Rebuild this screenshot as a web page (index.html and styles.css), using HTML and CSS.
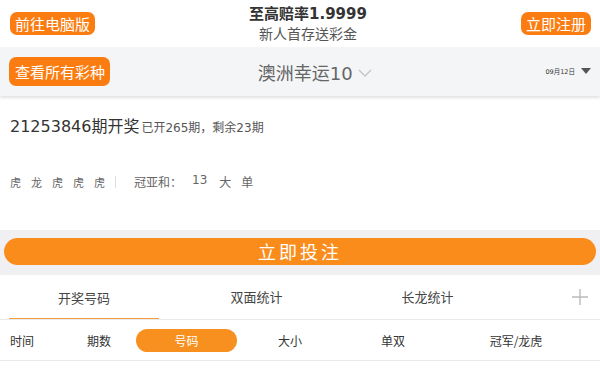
FILE: index.html
```html
<!DOCTYPE html>
<html lang="zh-CN">
<head>
    <meta charset="UTF-8">
    <meta name="viewport" content="width=device-width, initial-scale=1.0">
    <title>澳洲幸运10</title>
    <link rel="stylesheet" href="styles.css">
</head>
<body>
    <div class="topbar">
        <a class="btn">前往电脑版</a>
        <div class="promo">
            <div class="promo-title">至高赔率1.9999</div>
            <div class="promo-sub">新人首存送彩金</div>
        </div>
        <a class="btn">立即注册</a>
    </div>

    <div class="lottery-bar">
        <a class="btn btn-big">查看所有彩种</a>
        <div class="lottery-name">
            澳洲幸运10
            <svg width="14" height="8" viewBox="0 0 14 8"><path d="M1 1l6 6 6-6" fill="none" stroke="#c4c4c4" stroke-width="1.3"/></svg>
        </div>
        <div class="date">
            09月12日
            <svg width="10" height="6" viewBox="0 0 10 6"><path d="M0 0h10L5 6z" fill="#555"/></svg>
        </div>
    </div>

    <div class="result">
        <div class="issue">21253846期开奖<span class="issue-info">已开265期，剩余23期</span></div>
        <div class="draw">
            <span class="dt">虎</span><span class="dt">龙</span><span class="dt">虎</span><span class="dt">虎</span><span class="dt">虎</span>
            <span class="sep"></span>
            <span class="sum-label">冠亚和：</span>
            <span class="sum-num">13</span>
            <span class="sum-tag">大</span>
            <span class="sum-tag">单</span>
        </div>
    </div>

    <div class="bet-strip">
        <a class="bet-btn">立即投注</a>
    </div>

    <div class="tabs">
        <div class="tab active">开奖号码</div>
        <div class="tab">双面统计</div>
        <div class="tab">长龙统计</div>
        <div class="tab-plus">
            <svg width="18" height="18" viewBox="0 0 18 18"><path d="M9 1v16M1 9h16" stroke="#bbb" stroke-width="1.4"/></svg>
        </div>
    </div>

    <div class="cols">
        <div class="col col-left">时间</div>
        <div class="col">期数</div>
        <div class="col"><span class="pill">号码</span></div>
        <div class="col">大小</div>
        <div class="col">单双</div>
        <div class="col">冠军/龙虎</div>
    </div>
</body>
</html>
```

FILE: styles.css
```css
body {
    margin: 0;
    font-family: "DejaVu Sans", "Noto Sans CJK SC", sans-serif;
    color: #333;
    background: #fff;
    width: 600px;
    height: 375px;
    overflow: hidden;
}
.btn {
    display: inline-block;
    background-color: #fb7d12;
    color: #fff;
    font-family: "Noto Sans CJK SC", sans-serif;
    font-size: 15px;
    line-height: 23px;
    padding: 0 5px;
    border-radius: 7px;
}
.btn-big {
    line-height: 29px;
    padding: 0 5px 0 6px;
    border-radius: 7px;
}
.topbar {
    display: flex;
    align-items: center;
    justify-content: space-between;
    height: 47px;
    padding: 0 9px 0 10px;
}
.promo {
    text-align: center;
    margin-top: -1px;
}
.promo-title {
    font-size: 15px;
    font-weight: bold;
    line-height: 20px;
    color: #333;
}
.promo-sub {
    font-family: "Noto Sans CJK SC", sans-serif;
    font-size: 14px;
    line-height: 18px;
    color: #555;
}
.lottery-bar {
    display: flex;
    align-items: center;
    height: 49px;
    padding: 0 9px 0 9px;
    background-color: #f4f5f7;
    box-shadow: 0 2px 3px rgba(0, 0, 0, 0.12);
    position: relative;
}
.lottery-name {
    flex: 1;
    display: flex;
    align-items: center;
    justify-content: center;
    gap: 5px;
    font-size: 18px;
    color: #666;
    margin-left: -26px;
}
.lottery-name svg {
    margin-top: 2px;
}
.date {
    display: flex;
    align-items: center;
    gap: 6px;
    font-size: 6.5px;
    color: #333;
    margin-top: -2px;
}
.result {
    height: 134px;
    padding: 0 10px;
}
.issue {
    padding-top: 21px;
    font-size: 16px;
    line-height: 20px;
    color: #333;
}
.issue-info {
    font-size: 12px;
    color: #555;
    margin-left: 2px;
}
.draw {
    display: flex;
    align-items: center;
    margin-top: 35px;
    font-size: 11px;
    color: #666;
    font-family: "Noto Sans CJK SC", sans-serif;
}
.dt {
    margin-right: 10px;
}
.sep {
    width: 1px;
    height: 12px;
    background: #ddd;
    margin: 0 18px 0 0;
}
.sum-label {
    font-size: 12px;
    margin-right: 10px;
}
.sum-num {
    font-family: "DejaVu Sans", sans-serif;
    font-size: 12px;
    margin-right: 12px;
    margin-top: -3px;
}
.sum-tag {
    font-size: 12px;
    margin-right: 10px;
}
.bet-strip {
    background-color: #f0f0f2;
    padding: 8px 4px 10px;
}
.bet-btn {
    display: block;
    height: 27px;
    line-height: 27px;
    border-radius: 14px;
    background-color: #fa8c1c;
    color: #fff;
    text-align: center;
    font-family: "Noto Sans CJK SC", sans-serif;
    font-size: 18px;
    letter-spacing: 3px;
}
.tabs {
    display: flex;
    height: 44px;
    border-bottom: 1px solid #eaeaea;
}
.tab {
    width: 171px;
    display: flex;
    align-items: center;
    justify-content: center;
    font-family: "Noto Sans CJK SC", sans-serif;
    font-size: 13px;
    color: #444;
    margin-top: -1px;
}
.tab.active {
    box-shadow: inset 0 -2px 0 -1px #f5a040;
    margin: 0 12px 0 9px;
    width: 150px;
}
.tab-plus {
    flex: 1;
    display: flex;
    align-items: center;
    justify-content: flex-end;
    padding-right: 11px;
}
.cols {
    display: grid;
    grid-template-columns: 50px 78px 102px 100px 106px 1fr;
    align-items: center;
    height: 40px;
    padding: 0 14px 0 10px;
    border-bottom: 1px solid #eaeaea;
    font-family: "Noto Sans CJK SC", sans-serif;
    font-size: 12px;
    color: #333;
}
.col {
    text-align: center;
}
.col-left {
    text-align: left;
}
.pill {
    display: block;
    margin-left: -2px;
    width: 101px;
    line-height: 23px;
    border-radius: 12px;
    background-color: #f7901e;
    color: #fff;
}
```
